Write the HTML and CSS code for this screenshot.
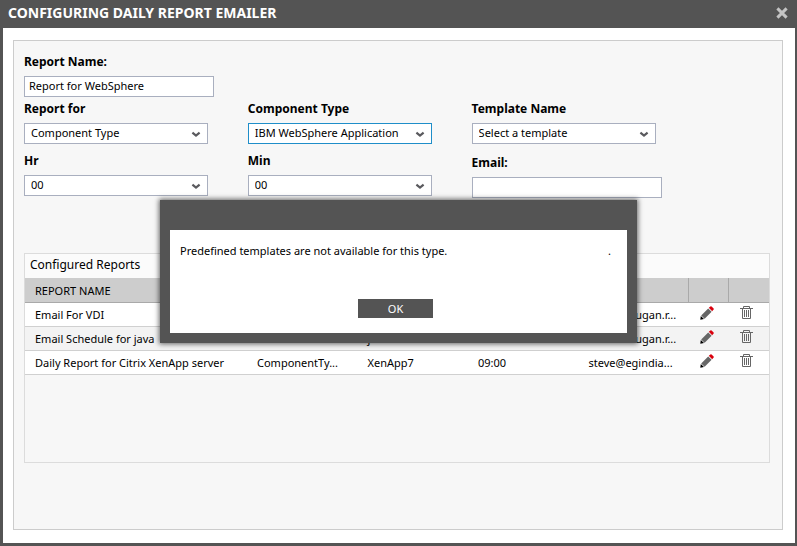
FILE: index.html
```html
<!DOCTYPE html>
<html lang="en">
<head>
<meta charset="utf-8">
<title>Configuring Daily Report Emailer</title>
<link rel="stylesheet" href="styles.css">
</head>
<body>
<svg class="sprite" aria-hidden="true">
  <symbol id="chevron" viewBox="0 0 10 8"><path d="M1.4 2.6 L5 5.6 L8.6 2.6" fill="none" stroke="#5a5a5e" stroke-width="2.2"/></symbol>
  <symbol id="pencil" viewBox="0 0 14 14">
    <path d="M0.3 13.7 L0.8 10 L4 13 Z" fill="#000"/>
    <path d="M1.2 9.4 L8.2 2.4 L11.6 5.8 L4.6 12.8 Z" fill="#666"/>
    <path d="M8.8 1.8 L10.4 0.4 Q11 0 11.6 0.5 L13.6 2.4 Q14 3 13.6 3.6 L12.2 5.2 Z" fill="#d9000d"/>
  </symbol>
  <symbol id="trash" viewBox="0 0 13 14">
    <path d="M0 2.5 H13 M3.5 2.5 V0.5 H9.5 V2.5 M2.5 2.5 V12.5 H10.5 V2.5 M4.5 4 V11 M6.5 4 V11 M8.5 4 V11" fill="none" stroke="#666" stroke-width="1"/>
  </symbol>
</svg>

<main class="window">
  <header class="titlebar">
    <h1>CONFIGURING DAILY REPORT EMAILER</h1>
    <button class="close" type="button" aria-label="Close">
      <svg viewBox="0 0 12 12"><path d="M1.4 1.4 L10.6 10.6 M10.6 1.4 L1.4 10.6" stroke="#c4c4c4" stroke-width="3"/></svg>
    </button>
  </header>

  <section class="panel">
    <form class="fields">
      <div class="field full">
        <label for="name">Report Name:</label>
        <input id="name" type="text" value="Report for WebSphere">
      </div>
      <div class="field">
        <label for="for">Report for</label>
        <div class="select"><select id="for"><option>Component Type</option></select><svg><use href="#chevron"/></svg></div>
      </div>
      <div class="field">
        <label for="ctype">Component Type</label>
        <div class="select active"><select id="ctype"><option>IBM WebSphere Application</option></select><svg><use href="#chevron"/></svg></div>
      </div>
      <div class="field">
        <label for="template">Template Name</label>
        <div class="select"><select id="template"><option>Select a template</option></select><svg><use href="#chevron"/></svg></div>
      </div>
      <div class="field">
        <label for="hr">Hr</label>
        <div class="select"><select id="hr"><option>00</option></select><svg><use href="#chevron"/></svg></div>
      </div>
      <div class="field">
        <label for="min">Min</label>
        <div class="select"><select id="min"><option>00</option></select><svg><use href="#chevron"/></svg></div>
      </div>
      <div class="field low">
        <label for="email">Email:</label>
        <input id="email" type="text">
      </div>
    </form>

    <section class="reports">
      <h2>Configured Reports</h2>
      <table>
        <colgroup><col class="c-name"><col><col><col><col><col class="c-icon"><col class="c-icon"></colgroup>
        <thead>
          <tr><th>REPORT NAME</th><th class="plain"></th><th class="plain"></th><th class="plain"></th><th></th><th></th><th></th></tr>
        </thead>
        <tbody>
          <tr>
            <td>Email For VDI</td><td></td><td></td><td></td><td>shanmurugan.r...</td>
            <td class="icon"><button type="button" aria-label="Edit"><svg class="pencil"><use href="#pencil"/></svg></button></td>
            <td class="icon"><button type="button" aria-label="Delete"><svg class="trash"><use href="#trash"/></svg></button></td>
          </tr>
          <tr>
            <td>Email Schedule for java</td><td></td><td>java</td><td></td><td>shanmurugan.r...</td>
            <td class="icon"><button type="button" aria-label="Edit"><svg class="pencil"><use href="#pencil"/></svg></button></td>
            <td class="icon"><button type="button" aria-label="Delete"><svg class="trash"><use href="#trash"/></svg></button></td>
          </tr>
          <tr>
            <td>Daily Report for Citrix XenApp server</td><td>ComponentTy...</td><td>XenApp7</td><td>09:00</td><td>steve@egindia...</td>
            <td class="icon"><button type="button" aria-label="Edit"><svg class="pencil"><use href="#pencil"/></svg></button></td>
            <td class="icon"><button type="button" aria-label="Delete"><svg class="trash"><use href="#trash"/></svg></button></td>
          </tr>
        </tbody>
      </table>
    </section>
  </section>
</main>

<div class="dialog" role="alertdialog" aria-describedby="msg">
  <div class="dialog-body">
    <p id="msg"><span>Predefined templates are not available for this type.</span><span>.</span></p>
    <button class="ok" type="button">OK</button>
  </div>
</div>
</body>
</html>
```
FILE: styles.css
```css
* { box-sizing: border-box; }
body {
  margin: 0;
  font: 11px/16px "Noto Sans", "Open Sans", sans-serif;
  color: #000;
}
h1, h2, p { margin: 0; }
button, input, select { font: inherit; color: inherit; }
.sprite { position: absolute; width: 0; height: 0; }

.window {
  display: flex;
  flex-direction: column;
  min-height: 100vh;
  background: #fff;
  border: solid #545454;
  border-width: 0 2px 3px 3px;
}
.titlebar {
  display: flex;
  align-items: center;
  justify-content: space-between;
  height: 28px;
  padding: 0 7px 3px 5px;
  background: #545454;
}
.titlebar h1 { font-size: 14px; line-height: 18px; font-weight: 700; color: #fff; }
.close { width: 12px; height: 12px; padding: 0; border: 0; background: none; }
.close svg { display: block; width: 12px; height: 12px; }

.panel {
  flex: 1;
  margin: 12px 12px 13px 10px;
  padding: 13px 12px 12px 10px;
  border: 1px solid #ccc;
  background: #f7f7f7;
}
.fields { display: grid; grid-template-columns: 30% 30% 1fr; }
.full { grid-column: 1 / -1; }
.field { height: 52px; }
.field.full { height: 47px; }
.field.low { padding-top: 2px; }
.field label { display: block; height: 22px; line-height: 16px; font-size: 12px; font-weight: 700; }
.field input {
  display: block;
  width: 190px;
  height: 21px;
  padding: 0 4px 2px;
  border: 1px solid #a9afbf;
  background: #fff;
}
.select { position: relative; width: 184px; }
.select select {
  display: block;
  appearance: none;
  width: 100%;
  height: 21px;
  padding: 0 6px 2px;
  border: 1px solid #a9afbf;
  border-radius: 0;
  background: #fff;
}
.select.active select { border-color: #1f8ec9; }
.select svg { position: absolute; right: 7px; top: 7px; width: 10px; height: 8px; pointer-events: none; }

.reports {
  min-height: 210px;
  margin-top: 48px;
  border: 1px solid #dcdcdc;
}
.reports h2 {
  height: 24px;
  padding: 0 5px;
  font-size: 12px;
  line-height: 22px;
  font-weight: 400;
  background: #fbfbfb;
}
table { width: 100%; table-layout: fixed; border-collapse: separate; border-spacing: 0; }
.c-name { width: 222px; }
.c-icon { width: 40px; }
th {
  height: 25px;
  padding: 2px 10px 0;
  font-weight: 400;
  text-align: left;
  background: #cdcdcd;
  border: solid #a9a9a9;
  border-width: 0 1px 1px 0;
}
th.plain, th:last-child { border-right-width: 0; }
td {
  height: 24px;
  padding: 0 0 0 10px;
  white-space: nowrap;
  background: #fff;
  border-bottom: 1px solid #d0d0d0;
}
tbody tr:nth-child(even) td { background: #f3f3f3; }
td.icon { padding: 0 5px 3px 0; }
td button { display: block; margin: 0 auto; padding: 0; border: 0; background: none; }
td svg { display: block; height: 14px; }
.pencil { width: 14px; }
.trash { width: 13px; }

.dialog {
  position: absolute;
  top: 200px;
  left: 0;
  right: 0;
  width: 477px;
  margin: 0 auto;
  padding: 30px 10px 10px;
  background: #545454;
  box-shadow: 0 0 5px 1px rgba(0, 0, 0, 0.6);
}
.dialog-body { padding: 13px 16px 15px 10px; background: #fff; }
.dialog p { display: flex; justify-content: space-between; }
.ok {
  display: block;
  width: 75px;
  height: 19px;
  margin: 40px auto 0;
  padding: 0;
  border: 0;
  background: #545454;
  color: #fff;
}
```
